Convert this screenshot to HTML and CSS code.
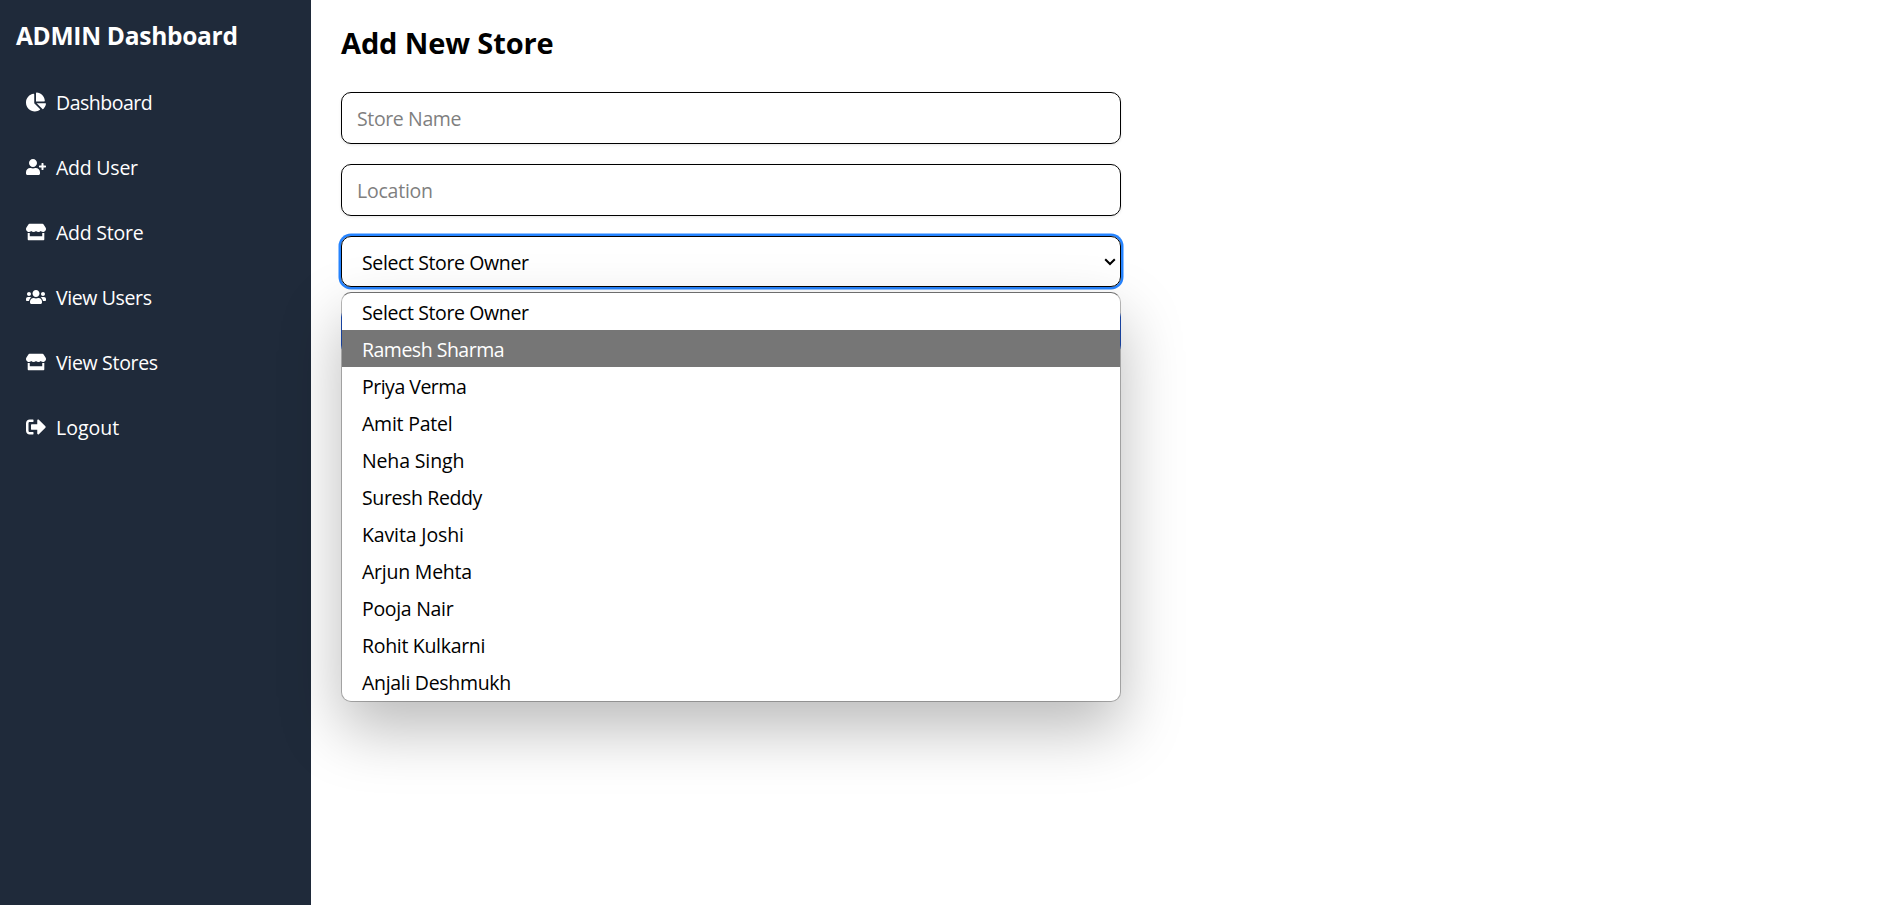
FILE: index.html
```html
<!DOCTYPE html>
<html lang="en">
<head>
<meta charset="utf-8">
<title>Add New Store</title>
<link rel="stylesheet" href="styles.css">
</head>
<body>
<div class="layout">
  <aside class="sidebar">
    <h2 class="brand">ADMIN Dashboard</h2>
    <nav class="nav">
      <a class="nav-item"><svg class="icon" viewBox="0 0 544 512"><path d="M527.790 288H290.500l158.030 158.030c6.040 6.040 15.980 6.530 22.190.68 38.700-36.460 65.320-85.610 73.130-140.860 1.340-9.460-6.510-17.850-16.060-17.850zm-15.830-64.800C503.720 103.740 408.260 8.280 288.800.04 279.680-.59 272 7.100 272 16.240V240h223.770c9.140 0 16.820-7.680 16.190-16.800zM224 288V50.710c0-9.550-8.390-17.400-17.840-16.060C86.990 51.490-4.100 155.600.14 280.370 4.500 408.510 114.830 513.590 243.030 511.980c50.400-.63 96.970-16.870 135.260-44.030 7.900-5.600 8.420-17.230 1.570-24.080L224 288z"/></svg><span class="track-5">Dashboard</span></a>
      <a class="nav-item"><svg class="icon" viewBox="0 0 640 512"><path d="M624 208h-64v-64c0-8.800-7.200-16-16-16h-32c-8.800 0-16 7.200-16 16v64h-64c-8.800 0-16 7.200-16 16v32c0 8.800 7.200 16 16 16h64v64c0 8.800 7.200 16 16 16h32c8.800 0 16-7.200 16-16v-64h64c8.800 0 16-7.200 16-16v-32c0-8.800-7.200-16-16-16zm-400 48c70.700 0 128-57.300 128-128S294.700 0 224 0 96 57.300 96 128s57.300 128 128 128zm89.600 32h-16.700c-22.200 10.200-46.900 16-72.900 16s-50.600-5.800-72.900-16h-16.700C60.200 288 0 348.200 0 422.400V464c0 26.500 21.500 48 48 48h352c26.500 0 48-21.500 48-48v-41.600c0-74.200-60.200-134.400-134.400-134.400z"/></svg><span class="track-2">Add User</span></a>
      <a class="nav-item"><svg class="icon" viewBox="0 0 616 512"><path d="M602 118.600L537.100 15C531.300 5.700 521 0 510 0H106C95 0 84.700 5.700 78.900 15L14 118.600c-33.500 53.500-3.800 127.900 58.800 136.400 4.500.6 9.100.9 13.700.9 29.600 0 55.800-13 73.800-33.100 18 20.100 44.300 33.100 73.800 33.100 29.600 0 55.800-13 73.800-33.100 18 20.100 44.300 33.100 73.800 33.100 29.600 0 55.800-13 73.800-33.100 18.100 20.100 44.300 33.100 73.800 33.100 4.700 0 9.200-.3 13.700-.9 62.800-8.400 92.600-82.800 59-136.400zM529.500 288c-10 0-19.900-1.500-29.500-3.800V384H116v-99.800c-9.600 2.200-19.500 3.800-29.500 3.800-6 0-12.100-.4-18-1.200-5.600-.8-11.100-2.100-16.400-3.600V480c0 17.700 14.300 32 32 32h448c17.700 0 32-14.300 32-32V283.200c-5.400 1.600-10.800 2.900-16.400 3.600-6.100.8-12.100 1.200-18.200 1.200z"/></svg><span class="track-2">Add Store</span></a>
      <a class="nav-item"><svg class="icon" viewBox="0 0 640 512"><path d="M96 224c35.300 0 64-28.700 64-64s-28.700-64-64-64-64 28.700-64 64 28.700 64 64 64zm448 0c35.300 0 64-28.700 64-64s-28.700-64-64-64-64 28.700-64 64 28.700 64 64 64zm32 32h-64c-17.600 0-33.500 7.100-45.100 18.600 40.300 22.100 68.900 62 75.100 109.400h66c17.700 0 32-14.300 32-32v-32c0-35.300-28.700-64-64-64zm-256 0c61.900 0 112-50.100 112-112S381.900 32 320 32 208 82.100 208 144s50.100 112 112 112zm76.800 32h-8.300c-20.800 10-43.900 16-68.500 16s-47.600-6-68.500-16h-8.300C179.600 288 128 339.600 128 403.200V432c0 26.500 21.500 48 48 48h288c26.500 0 48-21.500 48-48v-28.800c0-63.600-51.600-115.200-115.200-115.200zm-223.700-13.400C161.500 263.100 145.600 256 128 256H64c-35.300 0-64 28.700-64 64v32c0 17.700 14.300 32 32 32h65.900c6.300-47.400 34.900-87.300 75.200-109.400z"/></svg><span class="track-4">View Users</span></a>
      <a class="nav-item"><svg class="icon" viewBox="0 0 616 512"><path d="M602 118.600L537.100 15C531.300 5.700 521 0 510 0H106C95 0 84.700 5.700 78.900 15L14 118.600c-33.500 53.500-3.800 127.900 58.800 136.400 4.500.6 9.100.9 13.700.9 29.600 0 55.800-13 73.800-33.100 18 20.100 44.300 33.100 73.800 33.100 29.600 0 55.800-13 73.800-33.100 18 20.100 44.300 33.100 73.800 33.100 29.600 0 55.800-13 73.800-33.100 18.100 20.100 44.300 33.100 73.800 33.100 4.700 0 9.200-.3 13.700-.9 62.800-8.400 92.600-82.800 59-136.400zM529.500 288c-10 0-19.900-1.500-29.500-3.800V384H116v-99.800c-9.600 2.200-19.500 3.800-29.500 3.800-6 0-12.100-.4-18-1.200-5.600-.8-11.100-2.100-16.400-3.600V480c0 17.700 14.300 32 32 32h448c17.700 0 32-14.300 32-32V283.200c-5.400 1.600-10.800 2.900-16.400 3.600-6.100.8-12.100 1.200-18.200 1.200z"/></svg><span class="track-3">View Stores</span></a>
      <a class="nav-item"><svg class="icon" viewBox="0 0 512 512"><path d="M497 273L329 441c-15 15-41 4.500-41-17v-96H152c-13.300 0-24-10.700-24-24v-96c0-13.300 10.700-24 24-24h136V88c0-21.400 25.900-32 41-17l168 168c9.300 9.400 9.300 24.600 0 34zM192 436v-40c0-6.600-5.400-12-12-12H96c-17.700 0-32-14.300-32-32V160c0-17.700 14.300-32 32-32h84c6.600 0 12-5.400 12-12V76c0-6.600-5.400-12-12-12H96c-53 0-96 43-96 96v192c0 53 43 96 96 96h84c6.600 0 12-5.400 12-12z"/></svg><span>Logout</span></a>
    </nav>
  </aside>
  <main class="content">
    <h1 class="title">Add New Store</h1>
    <form class="form">
      <div class="field placeholder"><span class="track-4">Store Name</span></div>
      <div class="field placeholder"><span class="track-2">Location</span></div>
      <div class="select-wrap">
        <div class="select"><span class="track-4">Select Store Owner</span><svg class="chevron" viewBox="0 0 12 8"><path d="M1.200 1.200 6 6 10.800 1.200"/></svg></div>
        <ul class="menu">
          <li class="track-4">Select Store Owner</li>
          <li class="track-5 active">Ramesh Sharma</li>
          <li class="track-5">Priya Verma</li>
          <li class="track-2">Amit Patel</li>
          <li class="track-1">Neha Singh</li>
          <li class="track-4">Suresh Reddy</li>
          <li class="track-1">Kavita Joshi</li>
          <li class="track-2">Arjun Mehta</li>
          <li class="track-3">Pooja Nair</li>
          <li class="track-3">Rohit Kulkarni</li>
          <li class="track-3">Anjali Deshmukh</li>
        </ul>
      </div>
      <div class="submit"></div>
    </form>
  </main>
</div>
</body>
</html>
```
FILE: styles.css
```css
* { box-sizing: border-box; }
body { margin: 0; font-family: "Open Sans", "Noto Sans", sans-serif; font-size: 19.5px; color: #000; background: #fff; }
.layout { display: flex; height: 905px; overflow: hidden; }
.sidebar { width: 311px; flex: none; background: #1f2a3a; color: #fff; }
.brand { margin: 0; padding: 19px 0 0 16px; font-size: 24.5px; line-height: 33px; height: 70px; font-weight: 700; letter-spacing: -0.28px; }
.nav { display: flex; flex-direction: column; }
.nav-item { display: flex; align-items: center; height: 65px; padding-left: 26px; gap: 10px; }
.icon { width: 20px; height: 20px; fill: #fff; flex: none; margin-bottom: 1px; }
.content { flex: 1; padding: 23px 0 0 30px; }
.title { margin: 0; font-size: 29px; line-height: 40px; height: 69px; font-weight: 700; letter-spacing: -0.12px; }
.form { width: 780px; display: flex; flex-direction: column; gap: 20px; }
.field { height: 52px; border: 1px solid #000; border-radius: 10px; padding: 0 15px; display: flex; align-items: center; box-shadow: 0 1px 3px rgba(0,0,0,.1); }
.placeholder { color: #7f7f7f; }
.select-wrap { position: relative; height: 51px; }
.select { height: 51px; border: 1px solid #000; border-radius: 10px; padding: 0 10px 0 20px; display: flex; align-items: center; justify-content: space-between; box-shadow: 0 0 0 2.5px #2684ff; }
.select span { padding-top: 2px; }
.chevron { width: 12px; height: 8px; fill: none; stroke: #000; stroke-width: 2; margin-right: -6px; }
.menu { position: absolute; left: 0; top: 56px; width: 780px; height: 410px; margin: 0; padding: 0; list-style: none; border: 1px solid rgba(0,0,0,.27); border-top-color: rgba(0,0,0,.55); border-radius: 10px; background: #fff; background-clip: padding-box; overflow: hidden; box-shadow: 0 27px 62px rgba(0,0,0,.27); }
.menu li { height: 37px; line-height: 39px; padding-left: 20px; }
.menu .active { background: #767676; color: #fff; }
.submit { height: 48px; border-radius: 10px; background: #2563eb; }

/* Tracking steps that keep labels compact */
.track-1 { letter-spacing: -0.14px; }
.track-2 { letter-spacing: -0.23px; }
.track-3 { letter-spacing: -0.31px; }
.track-4 { letter-spacing: -0.38px; }
.track-5 { letter-spacing: -0.5px; }
```
